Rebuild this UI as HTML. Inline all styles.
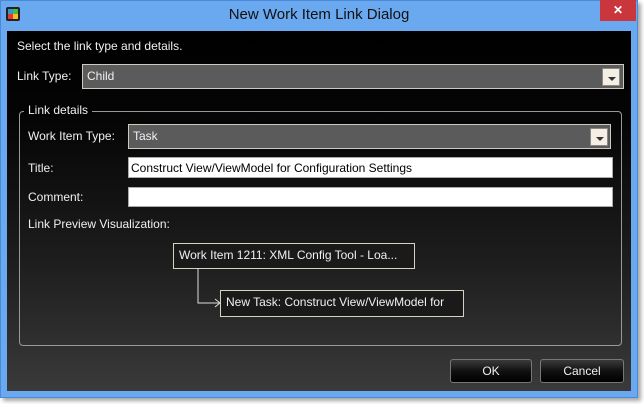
<!DOCTYPE html>
<html><head><style>
body{margin:0;width:644px;height:404px;background:#fff;position:relative;overflow:hidden;font-family:"Liberation Sans",sans-serif;font-size:12px;color:#f0f0f0}
.a{position:absolute}
.win{left:0;top:0;width:636px;height:396px;background:#6aa9f0;border:1px solid #4a8ad8;box-shadow:3px 3px 4px rgba(0,0,0,.35)}
.content{left:7px;top:31px;width:624px;height:360px;background:linear-gradient(#000 0%,#050505 25%,#1e1e1e 65%,#3a3a3a 100%)}
.combo{background:#5b5b5b;border:1px solid #cfc9c0;box-sizing:border-box}
.dd{background:#f5eee4;border:1px solid #888;box-sizing:border-box}
.dd:after{content:"";position:absolute;left:5px;top:8px;border-left:4px solid transparent;border-right:4px solid transparent;border-top:4px solid #333}
.inp{background:#fff;border:1px solid #aaa;box-sizing:border-box;color:#000}
.box{border:1px solid #d8d0c4;box-sizing:border-box;background:#1a1a1a;padding:4px 5px;white-space:nowrap}
.btn{border:1px solid #777;border-radius:3px;box-sizing:border-box;background:linear-gradient(#3a3a3a,#111 50%,#000);text-align:center;line-height:22px}
</style></head><body>
<div class="a win"></div>
<div class="a" style="left:6px;top:7px;width:14px;height:14px;background:#222;border-radius:2px">
 <div class="a" style="left:2px;top:2px;width:5px;height:5px;background:#39c"></div>
 <div class="a" style="left:7px;top:2px;width:5px;height:5px;background:#4b4"></div>
 <div class="a" style="left:2px;top:7px;width:5px;height:5px;background:#e33"></div>
 <div class="a" style="left:7px;top:7px;width:5px;height:5px;background:#fb2"></div>
</div>
<div class="a" style="left:0;width:638px;top:6px;text-align:center;font-size:15px;color:#111">New Work Item Link Dialog</div>
<div class="a" style="left:600px;top:0;width:36px;height:21px;background:#c9373c;color:#fff;text-align:center;font-weight:bold;font-size:12px;line-height:20px">✕</div>
<div class="a content"></div>
<div class="a" style="left:17px;top:39px">Select the link type and details.</div>
<div class="a" style="left:17px;top:69px">Link Type:</div>
<div class="a combo" style="left:82px;top:64px;width:542px;height:25px"><span class="a" style="left:4px;top:4px">Child</span></div>
<div class="a dd" style="left:602px;top:68px;width:18px;height:18px"></div>
<div class="a" style="left:19px;top:111px;width:603px;height:235px;border:1px solid #999;border-radius:4px;box-sizing:border-box"></div>
<div class="a" style="left:24px;top:103px;background:#030303;padding:0 4px">Link details</div>
<div class="a" style="left:28px;top:129px">Work Item Type:</div>
<div class="a combo" style="left:128px;top:124px;width:483px;height:25px"><span class="a" style="left:4px;top:4px">Task</span></div>
<div class="a dd" style="left:590px;top:128px;width:18px;height:18px"></div>
<div class="a" style="left:28px;top:161px">Title:</div>
<div class="a inp" style="left:128px;top:157px;width:485px;height:21px"><span class="a" style="left:2px;top:3px">Construct View/ViewModel for Configuration Settings</span></div>
<div class="a" style="left:28px;top:190px">Comment:</div>
<div class="a inp" style="left:128px;top:187px;width:485px;height:20px"></div>
<div class="a" style="left:28px;top:217px">Link Preview Visualization:</div>
<div class="a box" style="left:173px;top:243px;width:242px;height:26px">Work Item 1211: XML Config Tool - Loa...</div>
<div class="a box" style="left:220px;top:290px;width:244px;height:27px">New Task: Construct View/ViewModel for</div>
<svg class="a" style="left:190px;top:268px" width="35" height="40"><path d="M8 0V35H30M25 31L30 35L25 39" stroke="#ddd" fill="none"/></svg>
<div class="a btn" style="left:450px;top:359px;width:82px;height:24px">OK</div>
<div class="a btn" style="left:540px;top:359px;width:84px;height:24px">Cancel</div>
</body></html>
